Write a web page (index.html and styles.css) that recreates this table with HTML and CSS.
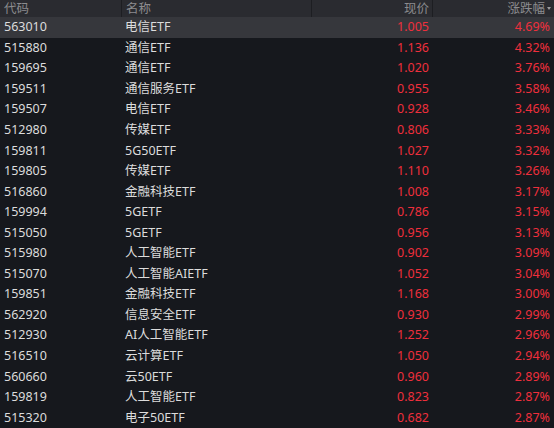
FILE: index.html
```html
<!DOCTYPE html>
<html lang="zh">
<head>
<meta charset="utf-8">
<link rel="stylesheet" href="styles.css">
</head>
<body>
<div class="table">
  <div class="row head">
    <div class="c code">代码</div>
    <div class="c name">名称</div>
    <div class="c price">现价</div>
    <div class="c pct">涨跌幅<span class="caret"></span></div>
  </div>
  <div class="row sel"><div class="c code">563010</div><div class="c name">电信ETF</div><div class="c price">1.005</div><div class="c pct">4.69%</div></div>
  <div class="row"><div class="c code">515880</div><div class="c name">通信ETF</div><div class="c price">1.136</div><div class="c pct">4.32%</div></div>
  <div class="row"><div class="c code">159695</div><div class="c name">通信ETF</div><div class="c price">1.020</div><div class="c pct">3.76%</div></div>
  <div class="row"><div class="c code">159511</div><div class="c name">通信服务ETF</div><div class="c price">0.955</div><div class="c pct">3.58%</div></div>
  <div class="row"><div class="c code">159507</div><div class="c name">电信ETF</div><div class="c price">0.928</div><div class="c pct">3.46%</div></div>
  <div class="row"><div class="c code">512980</div><div class="c name">传媒ETF</div><div class="c price">0.806</div><div class="c pct">3.33%</div></div>
  <div class="row"><div class="c code">159811</div><div class="c name">5G50ETF</div><div class="c price">1.027</div><div class="c pct">3.32%</div></div>
  <div class="row"><div class="c code">159805</div><div class="c name">传媒ETF</div><div class="c price">1.110</div><div class="c pct">3.26%</div></div>
  <div class="row"><div class="c code">516860</div><div class="c name">金融科技ETF</div><div class="c price">1.008</div><div class="c pct">3.17%</div></div>
  <div class="row"><div class="c code">159994</div><div class="c name">5GETF</div><div class="c price">0.786</div><div class="c pct">3.15%</div></div>
  <div class="row"><div class="c code">515050</div><div class="c name">5GETF</div><div class="c price">0.956</div><div class="c pct">3.13%</div></div>
  <div class="row"><div class="c code">515980</div><div class="c name">人工智能ETF</div><div class="c price">0.902</div><div class="c pct">3.09%</div></div>
  <div class="row"><div class="c code">515070</div><div class="c name">人工智能AIETF</div><div class="c price">1.052</div><div class="c pct">3.04%</div></div>
  <div class="row"><div class="c code">159851</div><div class="c name">金融科技ETF</div><div class="c price">1.168</div><div class="c pct">3.00%</div></div>
  <div class="row"><div class="c code">562920</div><div class="c name">信息安全ETF</div><div class="c price">0.930</div><div class="c pct">2.99%</div></div>
  <div class="row"><div class="c code">512930</div><div class="c name">AI人工智能ETF</div><div class="c price">1.252</div><div class="c pct">2.96%</div></div>
  <div class="row"><div class="c code">516510</div><div class="c name">云计算ETF</div><div class="c price">1.050</div><div class="c pct">2.94%</div></div>
  <div class="row"><div class="c code">560660</div><div class="c name">云50ETF</div><div class="c price">0.960</div><div class="c pct">2.89%</div></div>
  <div class="row"><div class="c code">159819</div><div class="c name">人工智能ETF</div><div class="c price">0.823</div><div class="c pct">2.87%</div></div>
  <div class="row"><div class="c code">515320</div><div class="c name">电子50ETF</div><div class="c price">0.682</div><div class="c pct">2.87%</div></div>
</div>
</body>
</html>
```
FILE: styles.css
```css
html, body {
  margin: 0;
  padding: 0;
  background: #16181d;
  overflow: hidden;
}
.table {
  width: 554px;
  font-family: "Noto Sans", "Noto Sans CJK SC", sans-serif;
  font-size: 12.5px;
}
.row {
  display: grid;
  grid-template-columns: 121px 190px 121px 122px;
  height: 20.55px;
  align-items: center;
  color: #dcdcdc;
}
.row.head {
  height: 17px;
  background: #2a2b30;
  color: #8c8c8f;
}
.row.head .c {
  border-left: 1px solid #1d1e22;
  height: 17px;
  line-height: 17px;
}
.row.head .c.code { border-left: none; }
.row.sel { background: #36373c; }
.c {
  white-space: nowrap;
  overflow: hidden;
  line-height: 20px;
}
.code { padding-left: 4px; }
.name { padding-left: 4px; }
.price { text-align: right; padding-right: 3px; color: #ef2f3c; }
.pct { text-align: right; padding-right: 4px; color: #ef2f3c; }
.row.head .price, .row.head .pct { color: #8c8c8f; }
.row.head .pct { padding-right: 3px; }
.caret {
  display: inline-block;
  width: 0; height: 0;
  border-left: 2.5px solid transparent;
  border-right: 2.5px solid transparent;
  border-top: 3px solid #9a9a9c;
  vertical-align: middle;
  margin-left: 2px;
  margin-bottom: 3px;
}
```
